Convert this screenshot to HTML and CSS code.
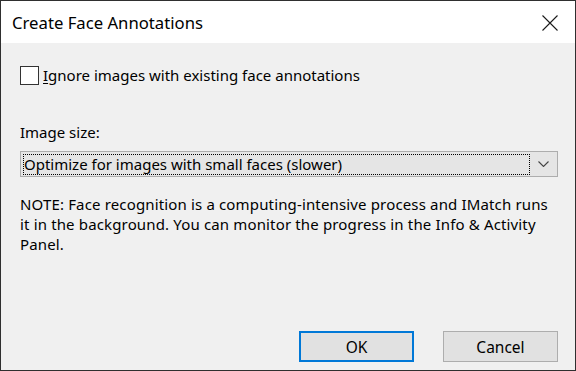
FILE: index.html
```html
<!DOCTYPE html>
<html>
<head>
<meta charset="utf-8">
<link rel="stylesheet" href="styles.css">
</head>
<body>
<div class="window">
  <div class="titlebar">
    <span class="title">Create Face Annotations</span>
    <svg class="close" width="16" height="16" viewBox="0 0 16 16"><path d="M0.5 0.5 L15.5 15.5 M15.5 0.5 L0.5 15.5" stroke="#1a1a1a" stroke-width="1.1" fill="none"/></svg>
  </div>
  <div class="content">
    <label class="check-row">
      <span class="checkbox"></span>
      <span class="check-label"><u>I</u>gnore images with existing face annotations</span>
    </label>
    <div class="field-label">Image size:</div>
    <div class="combo">
      <div class="combo-value">Optimize for images with small faces (slower)</div>
      <div class="combo-arrow">
        <svg width="11" height="6" viewBox="0 0 11 6"><path d="M0.5 0.5 L5.5 5.5 L10.5 0.5" stroke="#444" stroke-width="1.1" fill="none"/></svg>
      </div>
    </div>
    <p class="note">NOTE: Face recognition is a computing-intensive process and IMatch runs it in the background. You can monitor the progress in the Info &amp; Activity Panel.</p>
    <div class="buttons">
      <button class="btn btn-default">OK</button>
      <button class="btn">Cancel</button>
    </div>
  </div>
</div>
</body>
</html>
```
FILE: styles.css
```css
html, body {
  margin: 0;
  padding: 0;
}
body {
  font-family: "Noto Sans", "Segoe UI", sans-serif;
  font-size: 15px;
  color: #000;
}
.window {
  width: 576px;
  height: 371px;
  box-sizing: border-box;
  border: 1px solid #2f2f2f;
  display: flex;
  flex-direction: column;
  background: #f0f0f0;
}
.titlebar {
  height: 42px;
  background: #fff;
  display: flex;
  align-items: center;
  justify-content: space-between;
  padding: 0 17px 0 11px;
  flex: none;
}
.title {
  font-size: 16.7px;
  line-height: 20px;
  padding-top: 1px;
}
.close {
  display: block;
  margin-top: 1px;
}
.content {
  flex: 1;
  display: flex;
  flex-direction: column;
  padding: 22px 17px 8px 19px;
}
.check-row {
  display: flex;
  align-items: center;
  height: 20px;
}
.checkbox {
  width: 17px;
  height: 17px;
  border: 1px solid #333;
  background: #fff;
  flex: none;
}
.check-label {
  margin-left: 4px;
  line-height: 20px;
}
.check-label u {
  text-decoration-thickness: 1px;
  text-underline-offset: 2px;
}
.field-label {
  margin-top: 37px;
  line-height: 20px;
}
.combo {
  margin-top: 9px;
  height: 26px;
  box-sizing: border-box;
  border: 1px solid #adadad;
  background: #e5e5e5;
  display: flex;
  align-items: stretch;
}
.combo-value {
  flex: 1;
  margin: 2px 0 1px 2px;
  border: 1px dotted #000;
  line-height: 19px;
  padding-left: 0;
}
.combo-arrow {
  width: 27px;
  display: flex;
  align-items: center;
  justify-content: center;
}
.combo-arrow svg {
  display: block;
}
.note {
  margin: 17px 0 0 0;
  max-width: 530px;
  line-height: 20px;
  letter-spacing: 0.15px;
}
.buttons {
  margin-top: auto;
  display: flex;
  justify-content: flex-end;
  gap: 29px;
}
.btn {
  width: 115px;
  height: 31px;
  box-sizing: border-box;
  border: 1px solid #adadad;
  background: #e1e1e1;
  font-family: inherit;
  font-size: 15.5px;
  color: #000;
  padding: 0;
}
.btn-default {
  border: 2px solid #0078d7;
}
```
